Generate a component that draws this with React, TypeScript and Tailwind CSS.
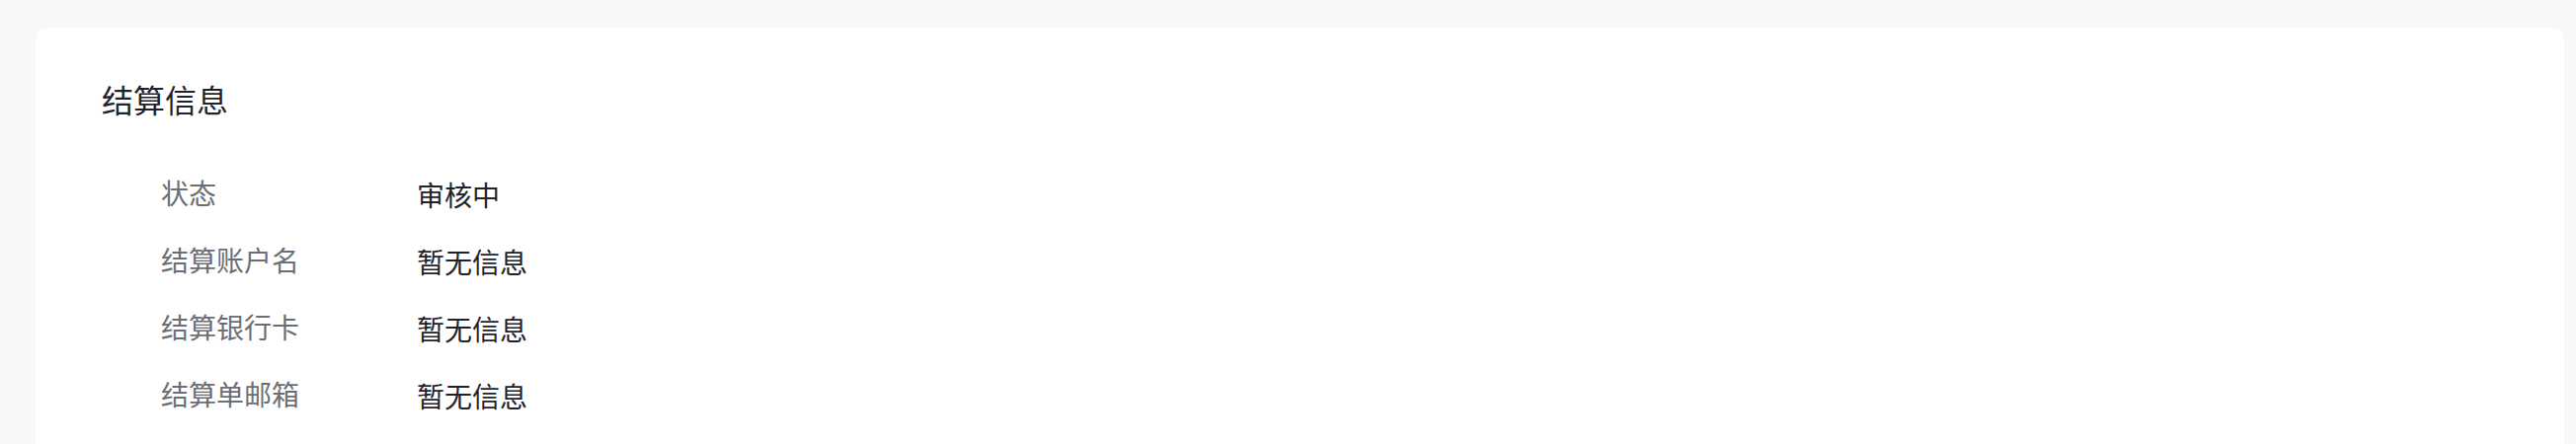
import React from "react";

const rows: { label: string; value: string }[] = [
    { label: "状态", value: "审核中" },
    { label: "结算账户名", value: "暂无信息" },
    { label: "结算银行卡", value: "暂无信息" },
    { label: "结算单邮箱", value: "暂无信息" },
];

function App() {
    return (
        <div
            className="min-h-[450px] bg-[#f7f8fa] pt-[28px] pl-[36px] pr-[12px]"
            style={{ fontFamily: '"Noto Sans CJK SC", "Noto Sans", sans-serif' }}
        >
            <div className="bg-white rounded-t-[10px] min-h-[422px] pl-[67px] pt-[50px] shadow-[0_0_3px_rgba(0,0,0,0.04)]">
                <h2 className="text-[32px] leading-[44px] text-[#1f2329]">结算信息</h2>

                <dl className="mt-[41px] pl-[60px]">
                    {rows.map((row) => (
                        <div key={row.label} className="flex h-[68px] items-center">
                            <dt className="w-[259px] text-[28px] leading-[40px] text-[#6b6e75] -mt-[4px]">
                                {row.label}
                            </dt>
                            <dd className="text-[28px] leading-[40px] text-[#1f2329]">
                                {row.value}
                            </dd>
                        </div>
                    ))}
                </dl>
            </div>
        </div>
    );
}

export default App;
